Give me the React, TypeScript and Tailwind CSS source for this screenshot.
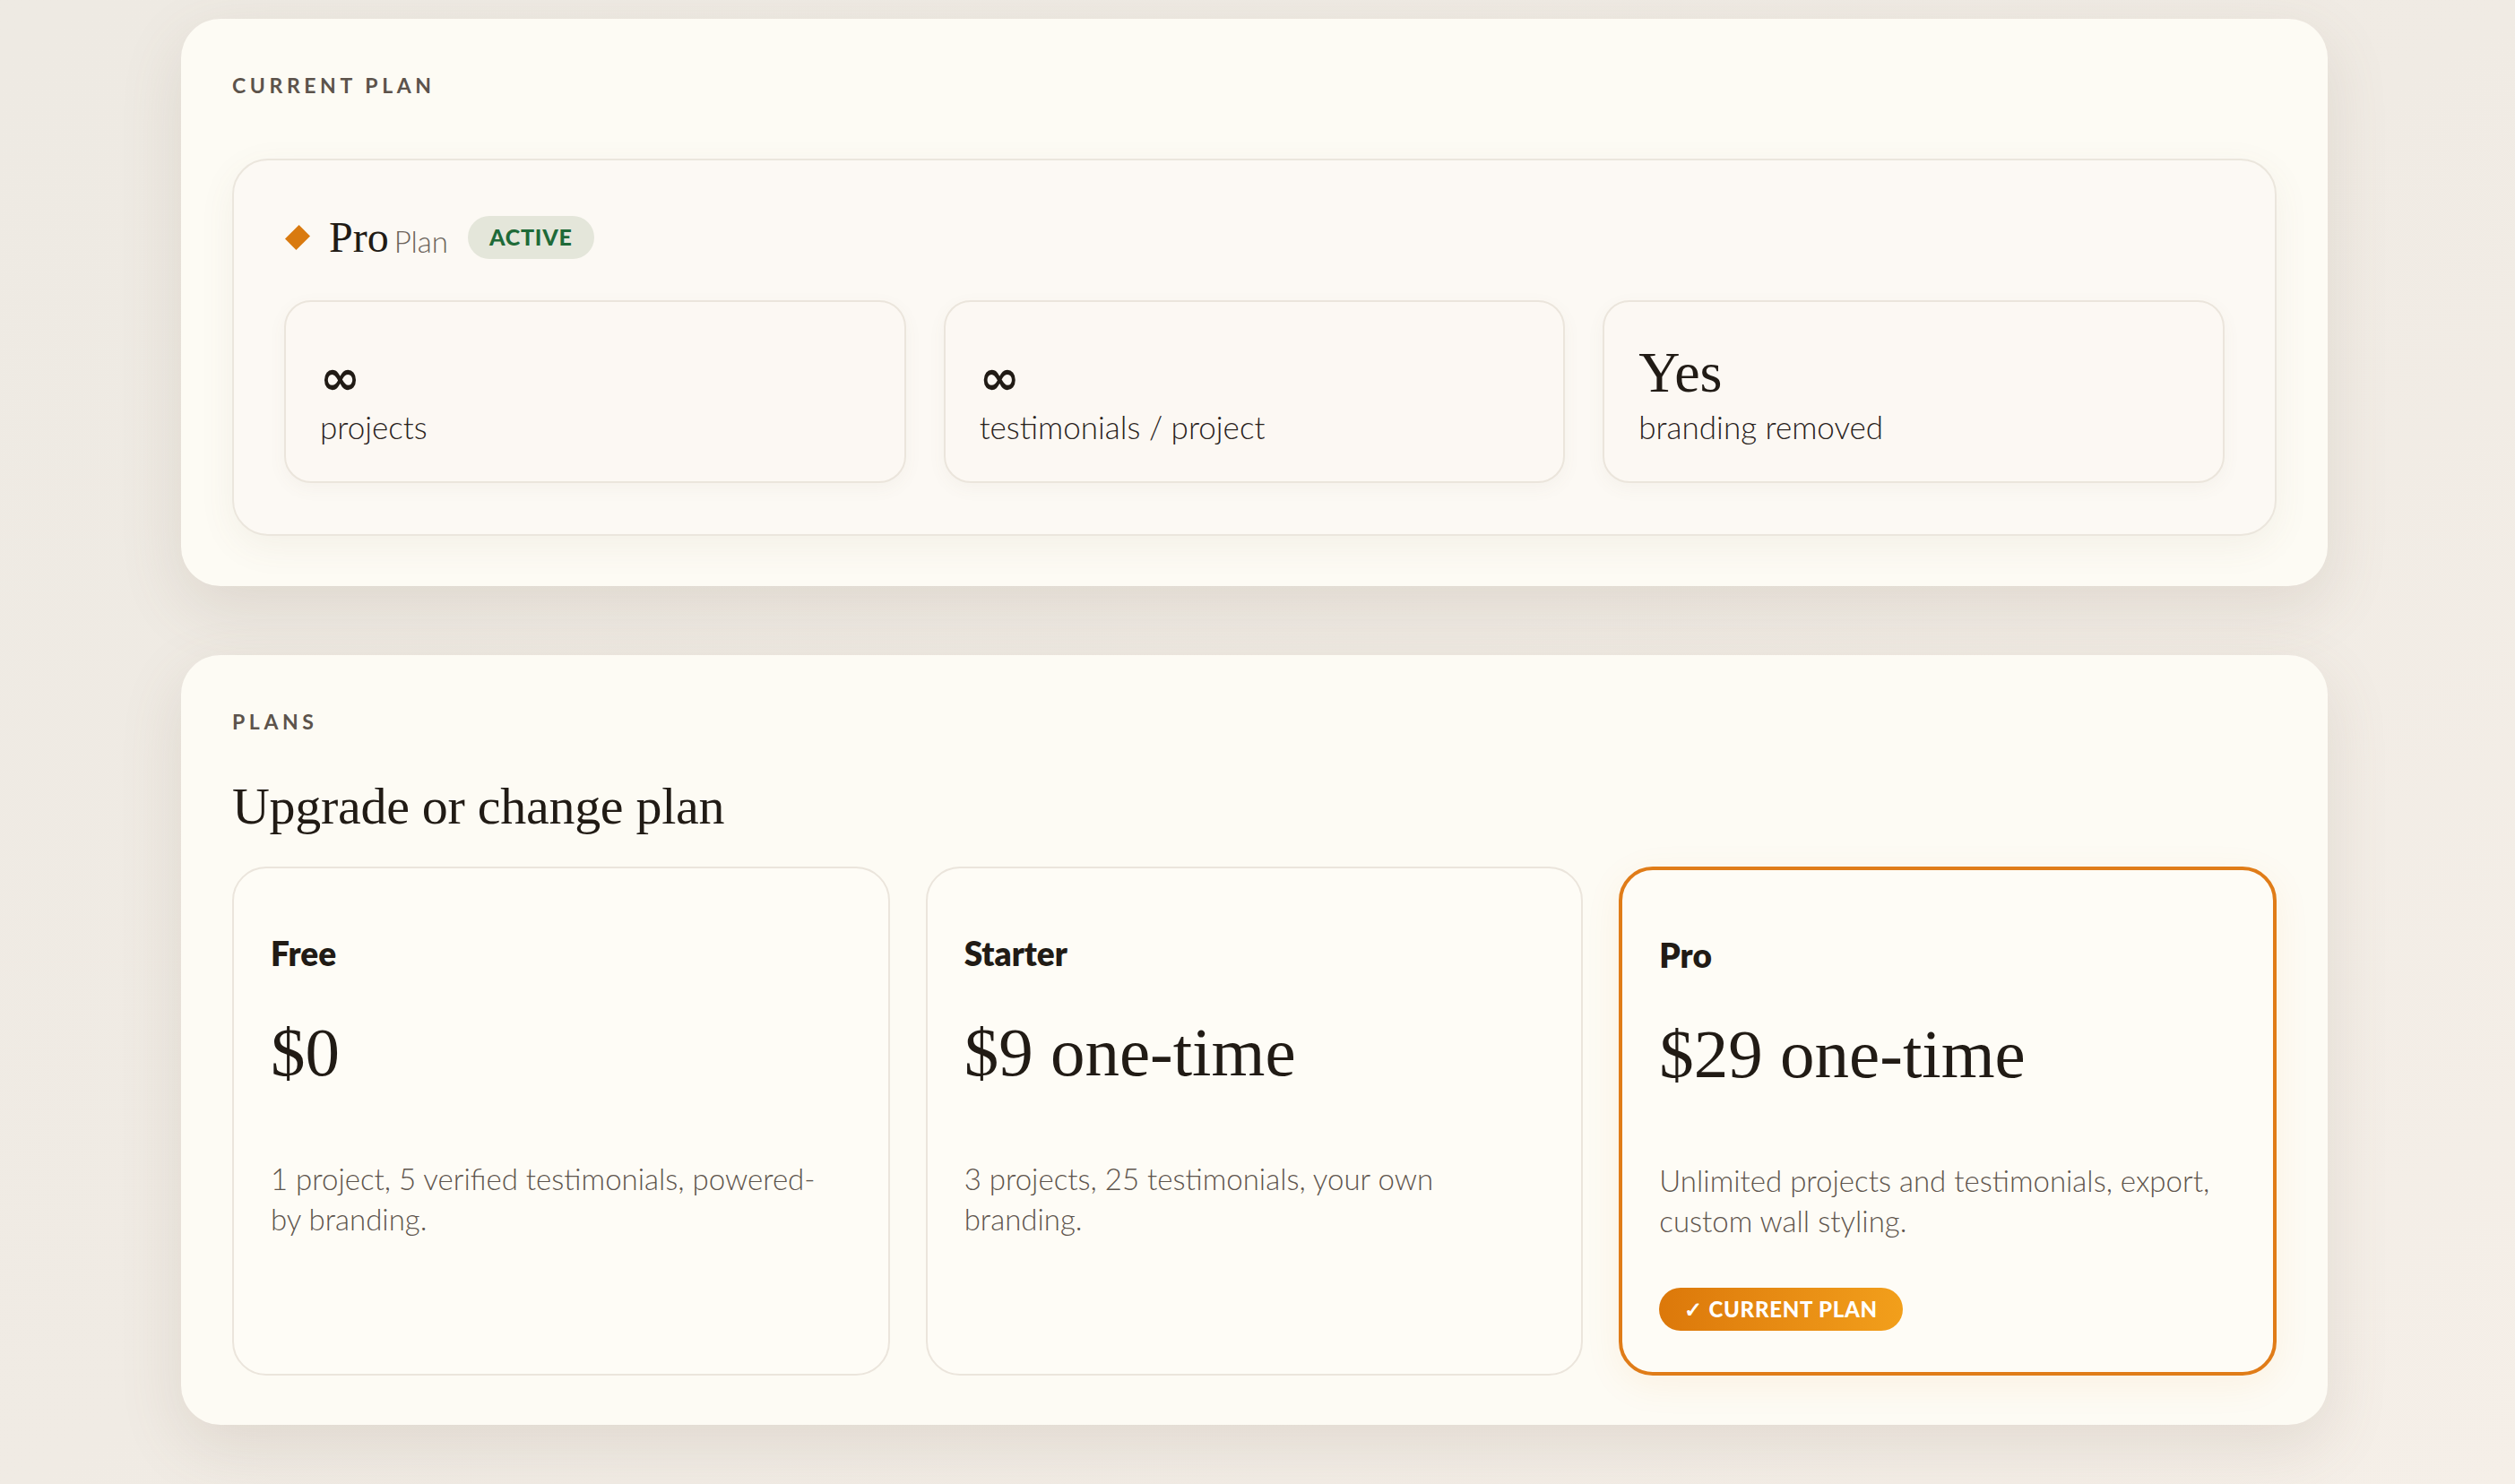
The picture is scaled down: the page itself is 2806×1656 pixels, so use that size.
const sans = "font-['Lato','Noto_Sans',sans-serif]";
const serif = "font-['Liberation_Serif','DejaVu_Serif',serif]";

const stats = [
  { value: "∞", label: "projects", big: false },
  { value: "∞", label: "testimonials / project", big: false },
  { value: "Yes", label: "branding removed", big: true },
];

const plans = [
  {
    name: "Free",
    price: "$0",
    desc: "1 project, 5 verified testimonials, powered-by branding.",
    current: false,
  },
  {
    name: "Starter",
    price: "$9 one-time",
    desc: "3 projects, 25 testimonials, your own branding.",
    current: false,
  },
  {
    name: "Pro",
    price: "$29 one-time",
    desc: "Unlimited projects and testimonials, export, custom wall styling.",
    current: true,
  },
];

function SectionLabel({ children }: { children: React.ReactNode }) {
  return (
    <div className={`${sans} text-[23px] font-bold uppercase tracking-[0.2em] text-[#5c534b] leading-none`}>
      {children}
    </div>
  );
}

export default function App() {
  return (
    <main className="min-h-[1656px] w-full bg-gradient-to-br from-[#eeeae3] via-[#f0ebe4] to-[#f5efe8] pt-[21px] pb-[60px]">
      <div className="ml-[202px] flex w-[2395px] flex-col gap-[77px] text-[#211b15]">
        {/* current plan */}
        <section className="rounded-[44px] bg-[#fdfbf4] px-[57px] pt-[63px] pb-[56px] shadow-[0_24px_70px_rgba(120,100,75,0.14)]">
          <SectionLabel>Current plan</SectionLabel>
          <div className="mt-[70px] rounded-[40px] border-2 border-[#ebe6dd] bg-[#fcf9f4] px-[56px] pt-[62px] pb-[57px] shadow-[0_12px_40px_rgba(120,100,75,0.07)]">
            <div className="flex items-center">
              <span className="ml-[4px] mr-[24px] block h-[22px] w-[22px] rotate-45 scale-x-[0.8] bg-[#d97a0f]" />
              <span className={`${serif} text-[48px] leading-none`}>Pro</span>
              <span className={`${sans} ml-[6px] mt-[8px] text-[33px] font-light leading-none text-[#6b625a]`}>Plan</span>
              <span className={`${sans} ml-[22px] flex h-[48px] items-center rounded-full bg-[#e4e6da] px-[24px] text-[25px] font-black tracking-[0.03em] text-[#1e6a38]`}>
                ACTIVE
              </span>
            </div>
            <div className="mt-[46px] grid grid-cols-3 gap-[42px]">
              {stats.map((s) => (
                <div
                  key={s.label}
                  className="flex h-[204px] flex-col justify-center rounded-[30px] border-2 border-[#ebe5dc] bg-[#fcf8f3] px-[38px] pt-[10px] shadow-[0_6px_20px_rgba(120,100,75,0.05)]"
                >
                  <div className={`${s.big ? `${serif} text-[64px]` : "font-['DejaVu_Sans',sans-serif] text-[54px] font-bold pt-[6px]"} h-[62px] leading-[62px]`}>
                    {s.value}
                  </div>
                  <div className={`${sans} mt-[8px] text-[35px] font-light leading-tight text-[#2a231d]`}>{s.label}</div>
                </div>
              ))}
            </div>
          </div>
        </section>

        {/* plans */}
        <section className="rounded-[44px] bg-[#fdfbf4] px-[57px] pt-[63px] pb-[55px] shadow-[0_24px_70px_rgba(120,100,75,0.14)]">
          <SectionLabel>Plans</SectionLabel>
          <h2 className={`${serif} mt-[54px] text-[58px] leading-none tracking-[-0.005em]`}>Upgrade or change plan</h2>
          <div className="mt-[38px] grid grid-cols-3 gap-[40px]">
            {plans.map((p) => (
              <div
                key={p.name}
                className={`flex h-[568px] flex-col rounded-[38px] bg-[#fefcf6] pl-[41px] pr-[61px] pt-[76px] ${
                  p.current
                    ? "border-[4px] border-[#e07c18] shadow-[0_10px_40px_rgba(224,124,24,0.08)]"
                    : "border-2 border-[#ebe5dc]"
                }`}
              >
                <div className={`${sans} text-[37px] font-extrabold leading-none`}>{p.name}</div>
                <div className={`${serif} mt-[54px] text-[77px] leading-none`}>{p.price}</div>
                <p className={`${sans} mt-[80px] text-[33px] font-light leading-[45px] text-[#5e554d]`}>{p.desc}</p>
                {p.current && (
                  <div className="mt-[52px]">
                    <span className={`${sans} inline-flex h-[48px] items-center rounded-full bg-gradient-to-r from-[#dc780a] to-[#f29f1b] px-[28px] text-[24px] font-black tracking-[0.03em] text-white`}>
                      ✓ CURRENT PLAN
                    </span>
                  </div>
                )}
              </div>
            ))}
          </div>
        </section>
      </div>
    </main>
  );
}
